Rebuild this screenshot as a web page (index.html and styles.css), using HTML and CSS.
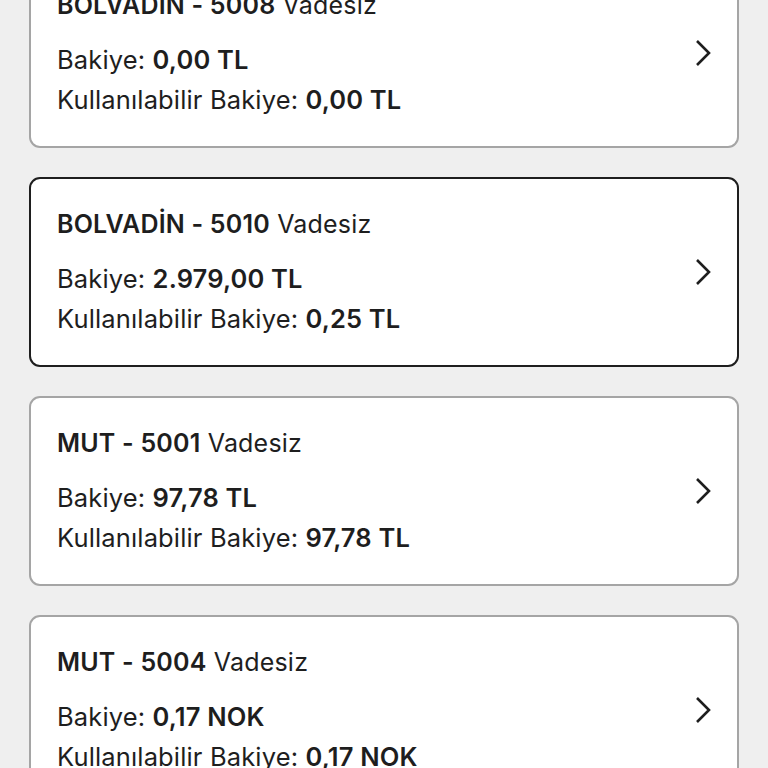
FILE: index.html
```html
<!DOCTYPE html>
<html lang="tr">
<head>
    <meta charset="UTF-8">
    <meta name="viewport" content="width=device-width, initial-scale=1.0">
    <title>Hesaplarım</title>
    <link rel="stylesheet" href="styles.css">
</head>
<body>
    <div class="account-list">
        <div class="account-card">
            <div class="account-info">
                <div class="account-title"><b>BOLVADİN - 5008</b> Vadesiz</div>
                <div class="balances">
                    <p>Bakiye: <b>0,00 TL</b></p>
                    <p>Kullanılabilir Bakiye: <b>0,00 TL</b></p>
                </div>
            </div>
            <svg class="chevron" viewBox="0 0 16 28"><path d="M2 2 L14 14 L2 26"/></svg>
        </div>

        <div class="account-card selected">
            <div class="account-info">
                <div class="account-title"><b>BOLVADİN - 5010</b> Vadesiz</div>
                <div class="balances">
                    <p>Bakiye: <b>2.979,00 TL</b></p>
                    <p>Kullanılabilir Bakiye: <b>0,25 TL</b></p>
                </div>
            </div>
            <svg class="chevron" viewBox="0 0 16 28"><path d="M2 2 L14 14 L2 26"/></svg>
        </div>

        <div class="account-card">
            <div class="account-info">
                <div class="account-title"><b>MUT - 5001</b> Vadesiz</div>
                <div class="balances">
                    <p>Bakiye: <b>97,78 TL</b></p>
                    <p>Kullanılabilir Bakiye: <b>97,78 TL</b></p>
                </div>
            </div>
            <svg class="chevron" viewBox="0 0 16 28"><path d="M2 2 L14 14 L2 26"/></svg>
        </div>

        <div class="account-card">
            <div class="account-info">
                <div class="account-title"><b>MUT - 5004</b> Vadesiz</div>
                <div class="balances">
                    <p>Bakiye: <b>0,17 NOK</b></p>
                    <p>Kullanılabilir Bakiye: <b>0,17 NOK</b></p>
                </div>
            </div>
            <svg class="chevron" viewBox="0 0 16 28"><path d="M2 2 L14 14 L2 26"/></svg>
        </div>
    </div>
</body>
</html>
```

FILE: styles.css
```css
* {
    margin: 0;
    padding: 0;
    box-sizing: border-box;
}

body {
    background-color: #efefef;
    font-family: Inter, "Noto Sans", sans-serif;
    color: #1e1e1e;
    overflow: hidden;
}

.account-list {
    display: flex;
    flex-direction: column;
    gap: 29px;
    padding: 0 29px;
    margin-top: -42px;
}

.account-card {
    background: white;
    border: 2px solid #a5a5a5;
    border-radius: 11px;
    height: 190px;
    padding: 26px 26px 28px 26px;
    display: flex;
    align-items: center;
    justify-content: space-between;
}

.account-card.selected {
    border-color: #1e1e1e;
}

.account-info {
    align-self: flex-start;
}

.account-title {
    font-size: 25px;
    line-height: 38px;
    font-weight: 400;
    letter-spacing: 0.2px;
}

.account-title b {
    font-weight: 600;
}

.balances {
    margin-top: 16px;
}

.balances p {
    font-size: 25.5px;
    line-height: 40px;
    letter-spacing: 0.15px;
}

.balances b {
    font-weight: 600;
}

.chevron {
    width: 16px;
    height: 28px;
    fill: none;
    stroke: #1e1e1e;
    stroke-width: 2.6;
    margin-top: 2px;
    flex-shrink: 0;
}
```
